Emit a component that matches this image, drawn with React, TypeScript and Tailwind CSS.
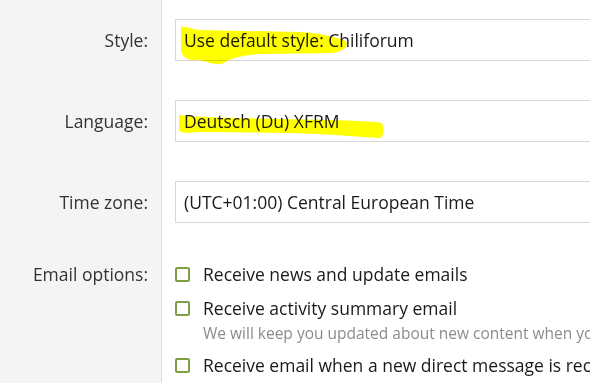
import React from 'react';

const fieldRows = [
  { label: 'Style:', value: 'Use default style: Chiliforum' },
  { label: 'Language:', value: 'Deutsch (Du) XFRM' },
  { label: 'Time zone:', value: '(UTC+01:00) Central European Time' },
];

const Checkbox: React.FC = () => (
  <span className="w-[15px] h-[15px] shrink-0 rounded-[2px] border-2 border-[#7d9f47] bg-white" />
);

const App: React.FC = () => {
  return (
    <div
      className="relative w-[590px] h-[383px] overflow-hidden bg-white text-[#222]"
      style={{ fontFamily: '"Open Sans", "Noto Sans", sans-serif' }}
    >
      {fieldRows.map((row) => (
        <div key={row.label} className="flex">
          <div className="w-[162px] shrink-0 bg-[#f4f4f4] border-r border-[#dddddd] pt-[19px] pb-[20px] pr-[13px]">
            <div className="h-[42px] flex items-center justify-end text-[17.5px] text-[#333]">
              {row.label}
            </div>
          </div>
          <div className="pl-[13px] pt-[19px] pb-[20px]">
            <div className="w-[520px] h-[42px] border border-[#d8d8d8] flex items-center pl-[8px] text-[17.5px] text-[#1a1a1a] whitespace-nowrap">
              {row.value}
            </div>
          </div>
        </div>
      ))}

      <div className="flex h-[140px]">
        <div className="w-[162px] shrink-0 bg-[#f4f4f4] border-r border-[#dddddd] pt-[19px] pr-[13px]">
          <div className="h-[24px] flex items-center justify-end text-[17.5px] text-[#333]">
            Email options:
          </div>
        </div>
        <div className="pl-[13px] pt-[19px] flex flex-col gap-[10px] whitespace-nowrap">
          <label className="flex items-center gap-[13px] h-[24px] text-[17.5px] text-[#1a1a1a]">
            <Checkbox />
            Receive news and update emails
          </label>
          <div>
            <label className="flex items-center gap-[13px] h-[24px] text-[17.5px] text-[#1a1a1a]">
              <Checkbox />
              Receive activity summary email
            </label>
            <p className="mt-[3px] pl-[28px] leading-[20px] text-[15.5px] text-[#8c8c8c]">
              We will keep you updated about new content when you are not online.
            </p>
          </div>
          <label className="flex items-center gap-[13px] h-[24px] text-[17.5px] text-[#1a1a1a]">
            <Checkbox />
            Receive email when a new direct message is received
          </label>
        </div>
      </div>

      {/* highlighter marks */}
      <svg
        className="absolute left-0 top-0 pointer-events-none mix-blend-multiply"
        width="590"
        height="383"
        viewBox="0 0 590 383"
      >
        <path
          d="M181,27 C186,26 192,29 198,30 L300,32 C320,33 336,37 346,41 C348,46 346,51 332,53 L262,54 C242,55 230,58 222,64 C212,65 206,61 199,60 C190,61 182,59 181,50 Z"
          fill="#ffff00"
        />
        <path
          d="M179,115 C190,117 230,118 280,119 L330,120 C350,121 372,121 382,123 C384,129 384,134 381,138 C360,137 330,134 290,133 L200,132 C190,133 182,134 179,130 Z"
          fill="#ffff00"
        />
      </svg>
    </div>
  );
};

export default App;
